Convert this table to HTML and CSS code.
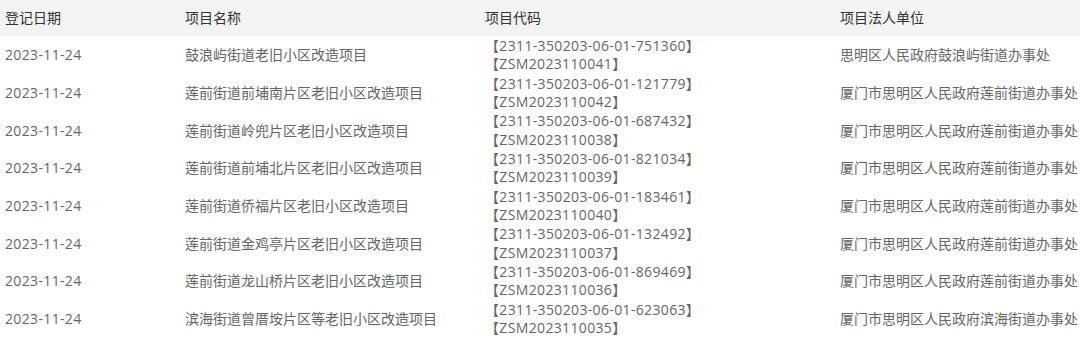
FILE: index.html
```html
<!DOCTYPE html>
<html lang="zh-CN">
<head>
<meta charset="utf-8">
<link rel="stylesheet" href="styles.css">
</head>
<body>
<table class="list">
  <colgroup>
    <col class="c-date"><col class="c-name"><col class="c-code"><col class="c-unit">
  </colgroup>
  <thead>
    <tr><th>登记日期</th><th>项目名称</th><th>项目代码</th><th>项目法人单位</th></tr>
  </thead>
  <tbody>
    <tr><td class="date">2023-11-24</td><td>鼓浪屿街道老旧小区改造项目</td><td class="code">【2311-350203-06-01-751360】<br>【ZSM2023110041】</td><td>思明区人民政府鼓浪屿街道办事处</td></tr>
    <tr><td class="date">2023-11-24</td><td>莲前街道前埔南片区老旧小区改造项目</td><td class="code">【2311-350203-06-01-121779】<br>【ZSM2023110042】</td><td>厦门市思明区人民政府莲前街道办事处</td></tr>
    <tr><td class="date">2023-11-24</td><td>莲前街道岭兜片区老旧小区改造项目</td><td class="code">【2311-350203-06-01-687432】<br>【ZSM2023110038】</td><td>厦门市思明区人民政府莲前街道办事处</td></tr>
    <tr><td class="date">2023-11-24</td><td>莲前街道前埔北片区老旧小区改造项目</td><td class="code">【2311-350203-06-01-821034】<br>【ZSM2023110039】</td><td>厦门市思明区人民政府莲前街道办事处</td></tr>
    <tr><td class="date">2023-11-24</td><td>莲前街道侨福片区老旧小区改造项目</td><td class="code">【2311-350203-06-01-183461】<br>【ZSM2023110040】</td><td>厦门市思明区人民政府莲前街道办事处</td></tr>
    <tr><td class="date">2023-11-24</td><td>莲前街道金鸡亭片区老旧小区改造项目</td><td class="code">【2311-350203-06-01-132492】<br>【ZSM2023110037】</td><td>厦门市思明区人民政府莲前街道办事处</td></tr>
    <tr><td class="date">2023-11-24</td><td>莲前街道龙山桥片区老旧小区改造项目</td><td class="code">【2311-350203-06-01-869469】<br>【ZSM2023110036】</td><td>厦门市思明区人民政府莲前街道办事处</td></tr>
    <tr><td class="date">2023-11-24</td><td>滨海街道曾厝垵片区等老旧小区改造项目</td><td class="code">【2311-350203-06-01-623063】<br>【ZSM2023110035】</td><td>厦门市思明区人民政府滨海街道办事处</td></tr>
  </tbody>
</table>
</body>
</html>
```
FILE: styles.css
```css
html, body {
  margin: 0;
  padding: 0;
  background: #fff;
  overflow: hidden;
}
body {
  font-family: "Open Sans", "Noto Sans CJK SC", sans-serif;
  font-size: 14px;
  color: #666;
}
.list {
  border-collapse: collapse;
  border-spacing: 0;
  table-layout: fixed;
  width: 1080px;
}
.c-date { width: 185px; }
.c-name { width: 300px; }
.c-code { width: 355px; }
.c-unit { width: 240px; }
.list th {
  background: #f4f4f4;
  color: #333;
  font-weight: normal;
  text-align: left;
  height: 36px;
  padding: 0;
  line-height: 36px;
}
.list th:first-child, .list td:first-child { padding-left: 5px; }
.list td {
  padding: 1px 0 0;
  height: 36.7px;
  line-height: 18.35px;
  vertical-align: middle;
  white-space: nowrap;
}
.list td.date { letter-spacing: 0.35px; }
.list td.code {
  vertical-align: top;
  letter-spacing: 0.35px;
}
```
